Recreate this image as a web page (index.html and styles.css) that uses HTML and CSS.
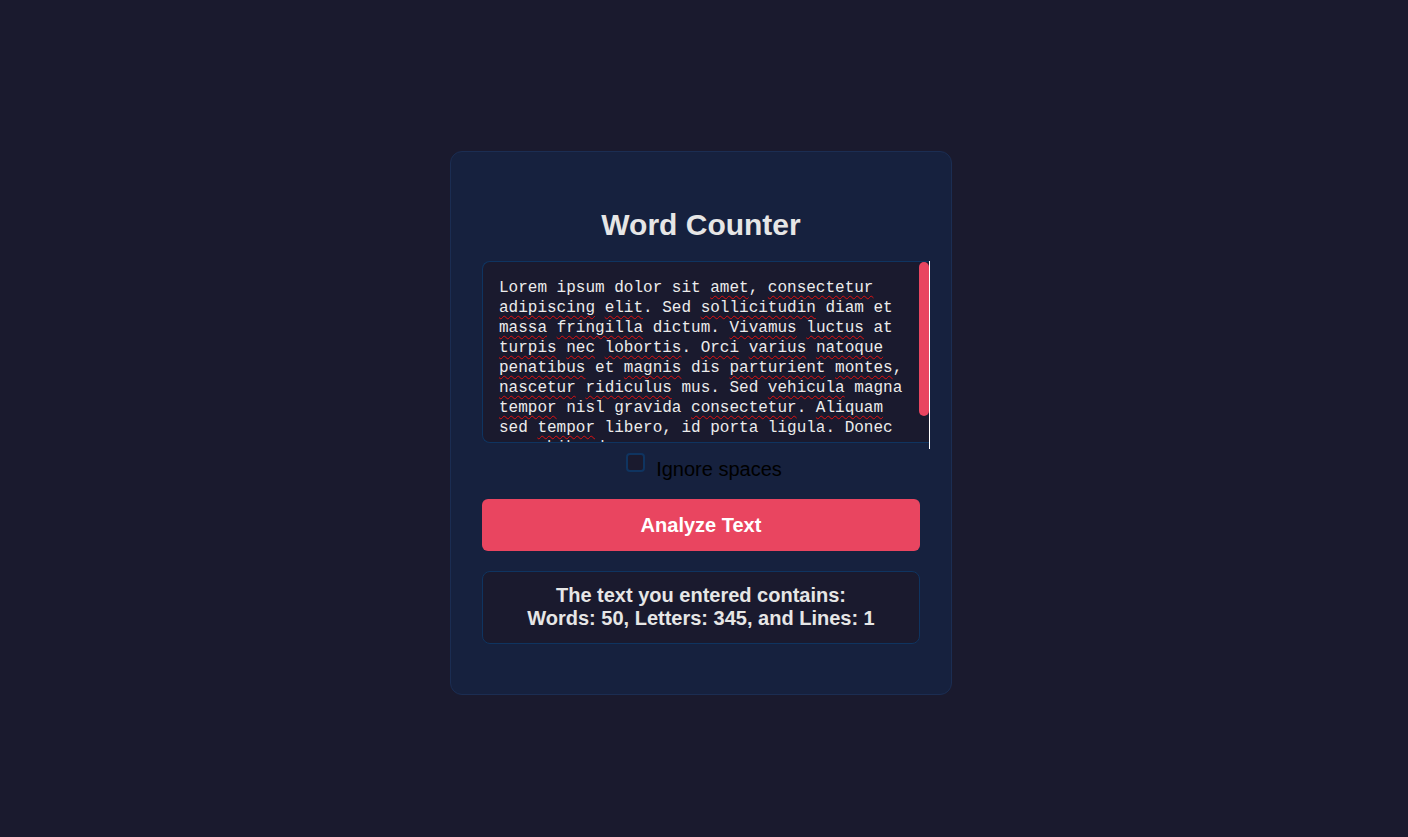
FILE: index.html
```html
<!DOCTYPE html>
<html lang="en">
<head>
<meta charset="utf-8">
<title>Word Counter</title>
<link rel="stylesheet" href="styles.css">
</head>
<body>
<main class="card">
  <h1 class="title">Word Counter</h1>
  <div class="editor">
    <div class="textbox" role="textbox" aria-multiline="true" contenteditable="true" spellcheck="true">Lorem ipsum dolor sit <span class="sp">amet</span>, <span class="sp">consectetur</span> <span class="sp">adipiscing</span> <span class="sp">elit</span>. Sed <span class="sp">sollicitudin</span> diam et <span class="sp">massa</span> <span class="sp">fringilla</span> dictum. <span class="sp">Vivamus</span> <span class="sp">luctus</span> at <span class="sp">turpis</span> <span class="sp">nec</span> <span class="sp">lobortis</span>. <span class="sp">Orci</span> <span class="sp">varius</span> <span class="sp">natoque</span> <span class="sp">penatibus</span> et <span class="sp">magnis</span> dis <span class="sp">parturient</span> <span class="sp">montes</span>, <span class="sp">nascetur</span> <span class="sp">ridiculus</span> mus. Sed <span class="sp">vehicula</span> magna <span class="sp">tempor</span> nisl gravida <span class="sp">consectetur</span>. <span class="sp">Aliquam</span> sed <span class="sp">tempor</span> libero, id porta ligula. Donec nunc <span class="sp">bibendum</span>.</div>
    <span class="scroll-thumb" aria-hidden="true"></span>
  </div>
  <label class="option">
    <input type="checkbox" class="check">
    <span class="option-text">Ignore spaces</span>
  </label>
  <button class="analyze" type="button">Analyze Text</button>
  <div class="result">
    The text you entered contains:<br>
    Words: 50, Letters: 345, and Lines: 1
  </div>
</main>
</body>
</html>
```
FILE: styles.css
```css
html, body {
  margin: 0;
  background: #1a1a2e;
}
body {
  min-height: 100vh;
  box-sizing: border-box;
  display: flex;
  justify-content: center;
  align-items: flex-start;
  padding: 151px 6px 0 0;
  font-family: "Liberation Sans", Arial, sans-serif;
}
.card {
  width: 438px;
  padding: 31px;
  border: 1px solid #1b2d52;
  border-radius: 12px;
  background: #16213e;
  display: flex;
  flex-direction: column;
}
.title {
  margin: 25px 0 19px;
  font-size: 30px;
  font-weight: bold;
  color: #e6e6e6;
  text-align: center;
  line-height: 34px;
}
.editor {
  position: relative;
  width: 448px;
  height: 182px;
}
.editor::after {
  content: "";
  position: absolute;
  right: 0;
  top: 0;
  bottom: -6px;
  width: 1px;
  background: #ffffff;
}
.scroll-thumb {
  position: absolute;
  top: 1px;
  right: 1px;
  width: 10px;
  height: 154px;
  border-radius: 5px;
  background: #e94560;
}
.textbox {
  box-sizing: border-box;
  width: 447px;
  height: 182px;
  padding: 16px 26px 16px 16px;
  border: 1px solid #0f3460;
  border-right: 0;
  border-radius: 8px 0 0 8px;
  background: #1a1a2e;
  color: #ececec;
  font-family: "Liberation Mono", "DejaVu Sans Mono", monospace;
  font-size: 16px;
  line-height: 20px;
  overflow: hidden;
  outline: none;
  white-space: pre-wrap;
  word-wrap: break-word;
}
.sp {
  text-decoration: underline wavy #e01010;
  text-decoration-thickness: 1.2px;
  text-underline-offset: 3px;
  text-decoration-skip-ink: none;
}
.option {
  display: flex;
  justify-content: center;
  align-items: flex-start;
  margin-top: 9px;
  padding-left: 6px;
  color: #000000;
  font-size: 20px;
}
.check {
  appearance: none;
  -webkit-appearance: none;
  box-sizing: border-box;
  width: 19px;
  height: 19px;
  margin: 1px 11px 0 0;
  border: 2px solid #0f3460;
  border-radius: 4px;
  background: #1a1a2e;
}
.option-text {
  margin-top: 6px;
  line-height: 23px;
}
.analyze {
  margin-top: 18px;
  height: 52px;
  border: 0;
  border-radius: 6px;
  background: #e94560;
  color: #ffffff;
  font-family: "Liberation Sans", Arial, sans-serif;
  font-size: 20px;
  font-weight: bold;
  cursor: pointer;
}
.result {
  margin: 20px 0 19px;
  padding: 12px 16px 12px;
  border: 1px solid #0f3460;
  border-radius: 8px;
  background: #1a1a2e;
  color: #e6e6e6;
  font-size: 20px;
  font-weight: bold;
  line-height: 23.3px;
  text-align: center;
}
```
